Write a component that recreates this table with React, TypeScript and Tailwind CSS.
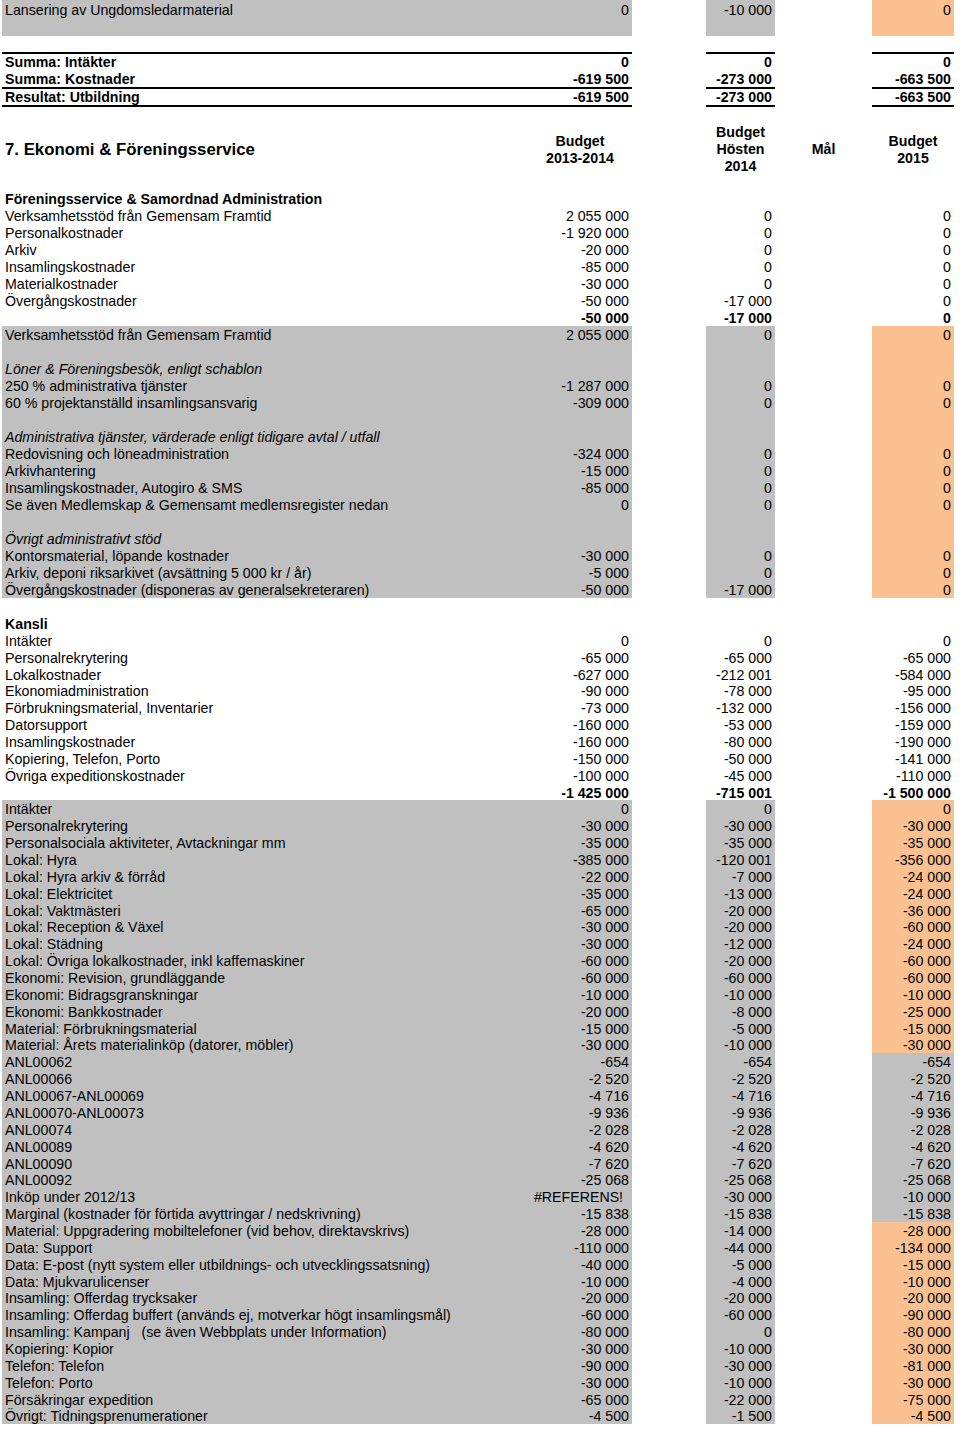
import React from "react";

type Fill = "none" | "gray" | "orange";
type Line = { l?: string; v?: [string, string, string]; bold?: boolean; italic?: boolean };

const fills: Record<Fill, string> = {
  none: "",
  gray: "bg-[#c0c0c0]",
  orange: "bg-[#fac090]",
};

const TALL = "h-[17px] leading-[19px]";
const NARROW = "h-[16.87px] leading-[19px]";

function Row({
  line,
  ab = "none",
  c = "none",
  e = "none",
  h = TALL,
}: {
  line: Line;
  ab?: Fill;
  c?: Fill;
  e?: Fill;
  h?: string;
}) {
  const [vb, vc, ve] = line.v ?? ["", "", ""];
  const wt = line.bold ? "font-bold" : "";
  // text sits in a relative span so descenders paint above the next row's fill
  return (
    <div className={`flex ${h} whitespace-pre`}>
      <div className={`w-[526px] pl-[3px] ${fills[ab]} ${wt} ${line.italic ? "italic" : ""}`}>
        <span className="relative">{line.l}</span>
      </div>
      <div className={`w-[104px] pr-[3px] ${vb === "#REFERENS!" ? "text-center" : "text-right"} ${fills[ab]} ${wt}`}>
        <span className="relative">{vb}</span>
      </div>
      <div className="w-[74px]" />
      <div className={`w-[69px] pr-[3px] text-right ${fills[c]} ${wt}`}>
        <span className="relative">{vc}</span>
      </div>
      <div className="w-[97px]" />
      <div className={`w-[82px] pr-[3px] text-right ${fills[e]} ${wt}`}>
        <span className="relative">{ve}</span>
      </div>
    </div>
  );
}

function Rule() {
  return (
    <div className="flex h-[2px]">
      <div className="w-[630px] bg-black" />
      <div className="w-[74px]" />
      <div className="w-[69px] bg-black" />
      <div className="w-[97px]" />
      <div className="w-[82px] bg-black" />
    </div>
  );
}

const z: [string, string, string] = ["0", "0", "0"];

const foreningsservice: Line[] = [
  { l: "Föreningsservice & Samordnad Administration", bold: true },
  { l: "Verksamhetsstöd från Gemensam Framtid", v: ["2 055 000", "0", "0"] },
  { l: "Personalkostnader", v: ["-1 920 000", "0", "0"] },
  { l: "Arkiv", v: ["-20 000", "0", "0"] },
  { l: "Insamlingskostnader", v: ["-85 000", "0", "0"] },
  { l: "Materialkostnader", v: ["-30 000", "0", "0"] },
  { l: "Övergångskostnader", v: ["-50 000", "-17 000", "0"] },
  { v: ["-50 000", "-17 000", "0"], bold: true },
];

const foreningsGray: Line[] = [
  { l: "Verksamhetsstöd från Gemensam Framtid", v: ["2 055 000", "0", "0"] },
  {},
  { l: "Löner & Föreningsbesök, enligt schablon", italic: true },
  { l: "250 % administrativa tjänster", v: ["-1 287 000", "0", "0"] },
  { l: "60 % projektanställd insamlingsansvarig", v: ["-309 000", "0", "0"] },
  {},
  { l: "Administrativa tjänster, värderade enligt tidigare avtal / utfall", italic: true },
  { l: "Redovisning och löneadministration", v: ["-324 000", "0", "0"] },
  { l: "Arkivhantering", v: ["-15 000", "0", "0"] },
  { l: "Insamlingskostnader, Autogiro & SMS", v: ["-85 000", "0", "0"] },
  { l: "Se även Medlemskap & Gemensamt medlemsregister nedan", v: z },
  {},
  { l: "Övrigt administrativt stöd", italic: true },
  { l: "Kontorsmaterial, löpande kostnader", v: ["-30 000", "0", "0"] },
  { l: "Arkiv, deponi riksarkivet (avsättning 5 000 kr / år)", v: ["-5 000", "0", "0"] },
  { l: "Övergångskostnader (disponeras av generalsekreteraren)", v: ["-50 000", "-17 000", "0"] },
];

const kansli: Line[] = [
  { l: "Kansli", bold: true },
  { l: "Intäkter", v: z },
  { l: "Personalrekrytering", v: ["-65 000", "-65 000", "-65 000"] },
  { l: "Lokalkostnader", v: ["-627 000", "-212 001", "-584 000"] },
  { l: "Ekonomiadministration", v: ["-90 000", "-78 000", "-95 000"] },
  { l: "Förbrukningsmaterial, Inventarier", v: ["-73 000", "-132 000", "-156 000"] },
  { l: "Datorsupport", v: ["-160 000", "-53 000", "-159 000"] },
  { l: "Insamlingskostnader", v: ["-160 000", "-80 000", "-190 000"] },
  { l: "Kopiering, Telefon, Porto", v: ["-150 000", "-50 000", "-141 000"] },
  { l: "Övriga expeditionskostnader", v: ["-100 000", "-45 000", "-110 000"] },
  { v: ["-1 425 000", "-715 001", "-1 500 000"], bold: true },
];

const kansliOrange1: Line[] = [
  { l: "Intäkter", v: z },
  { l: "Personalrekrytering", v: ["-30 000", "-30 000", "-30 000"] },
  { l: "Personalsociala aktiviteter, Avtackningar mm", v: ["-35 000", "-35 000", "-35 000"] },
  { l: "Lokal: Hyra", v: ["-385 000", "-120 001", "-356 000"] },
  { l: "Lokal: Hyra arkiv & förråd", v: ["-22 000", "-7 000", "-24 000"] },
  { l: "Lokal: Elektricitet", v: ["-35 000", "-13 000", "-24 000"] },
  { l: "Lokal: Vaktmästeri", v: ["-65 000", "-20 000", "-36 000"] },
  { l: "Lokal: Reception & Växel", v: ["-30 000", "-20 000", "-60 000"] },
  { l: "Lokal: Städning", v: ["-30 000", "-12 000", "-24 000"] },
  { l: "Lokal: Övriga lokalkostnader, inkl kaffemaskiner", v: ["-60 000", "-20 000", "-60 000"] },
  { l: "Ekonomi: Revision, grundläggande", v: ["-60 000", "-60 000", "-60 000"] },
  { l: "Ekonomi: Bidragsgranskningar", v: ["-10 000", "-10 000", "-10 000"] },
  { l: "Ekonomi: Bankkostnader", v: ["-20 000", "-8 000", "-25 000"] },
  { l: "Material: Förbrukningsmaterial", v: ["-15 000", "-5 000", "-15 000"] },
  { l: "Material: Årets materialinköp (datorer, möbler)", v: ["-30 000", "-10 000", "-30 000"] },
];

const anl: Line[] = [
  { l: "ANL00062", v: ["-654", "-654", "-654"] },
  { l: "ANL00066", v: ["-2 520", "-2 520", "-2 520"] },
  { l: "ANL00067-ANL00069", v: ["-4 716", "-4 716", "-4 716"] },
  { l: "ANL00070-ANL00073", v: ["-9 936", "-9 936", "-9 936"] },
  { l: "ANL00074", v: ["-2 028", "-2 028", "-2 028"] },
  { l: "ANL00089", v: ["-4 620", "-4 620", "-4 620"] },
  { l: "ANL00090", v: ["-7 620", "-7 620", "-7 620"] },
  { l: "ANL00092", v: ["-25 068", "-25 068", "-25 068"] },
  { l: "Inköp under 2012/13", v: ["#REFERENS!", "-30 000", "-10 000"] },
  { l: "Marginal (kostnader för förtida avyttringar / nedskrivning)", v: ["-15 838", "-15 838", "-15 838"] },
];

const kansliOrange2: Line[] = [
  { l: "Material: Uppgradering mobiltelefoner (vid behov, direktavskrivs)", v: ["-28 000", "-14 000", "-28 000"] },
  { l: "Data: Support", v: ["-110 000", "-44 000", "-134 000"] },
  { l: "Data: E-post (nytt system eller utbildnings- och utvecklingssatsning)", v: ["-40 000", "-5 000", "-15 000"] },
  { l: "Data: Mjukvarulicenser", v: ["-10 000", "-4 000", "-10 000"] },
  { l: "Insamling: Offerdag trycksaker", v: ["-20 000", "-20 000", "-20 000"] },
  { l: "Insamling: Offerdag buffert (används ej, motverkar högt insamlingsmål)", v: ["-60 000", "-60 000", "-90 000"] },
  { l: "Insamling: Kampanj   (se även Webbplats under Information)", v: ["-80 000", "0", "-80 000"] },
  { l: "Kopiering: Kopior", v: ["-30 000", "-10 000", "-30 000"] },
  { l: "Telefon: Telefon", v: ["-90 000", "-30 000", "-81 000"] },
  { l: "Telefon: Porto", v: ["-30 000", "-10 000", "-30 000"] },
  { l: "Försäkringar expedition", v: ["-65 000", "-22 000", "-75 000"] },
  { l: "Övrigt: Tidningsprenumerationer", v: ["-4 500", "-1 500", "-4 500"] },
];

export default function App() {
  return (
    <div className="min-h-[1433px] w-[960px] bg-white pl-[2px] font-['Liberation_Sans',Arial,sans-serif] text-[14.2px] text-black">
      {/* Utbildning – tail */}
      <Row line={{ l: "Lansering av Ungdomsledarmaterial", v: ["0", "-10 000", "0"] }} ab="gray" c="gray" e="orange" h="h-[18px] leading-[20px]" />
      <Row line={{}} ab="gray" c="gray" e="orange" h="h-[18px] leading-[18px]" />
      <div className="h-[16px]" />
      <Rule />
      <Row line={{ l: "Summa: Intäkter", v: ["0", "0", "0"], bold: true }} h="h-[17px] leading-[17px]" />
      <Row line={{ l: "Summa: Kostnader", v: ["-619 500", "-273 000", "-663 500"], bold: true }} h="h-[16px] leading-[17px]" />
      <Rule />
      <Row line={{ l: "Resultat: Utbildning", v: ["-619 500", "-273 000", "-663 500"], bold: true }} h="h-[16px] leading-[16px]" />
      <Rule />
      <div className="h-[17px]" />

      {/* Section header */}
      <div className="flex h-[51px] items-center font-bold leading-[17px]">
        <div className="w-[526px] pl-[3px] text-[16.8px]">7. Ekonomi &amp; Föreningsservice</div>
        <div className="w-[104px] text-center">
          Budget
          <br />
          2013-2014
        </div>
        <div className="w-[74px]" />
        <div className="w-[69px] text-center">
          Budget
          <br />
          Hösten
          <br />
          2014
        </div>
        <div className="w-[97px] text-center">Mål</div>
        <div className="w-[82px] text-center">
          Budget
          <br />
          2015
        </div>
      </div>
      <div className="h-[15px]" />

      {foreningsservice.map((r, i) => (
        <Row key={`f${i}`} line={r} />
      ))}
      {foreningsGray.map((r, i) => (
        <Row key={`g${i}`} line={r} ab="gray" c="gray" e="orange" />
      ))}
      <div className="h-[17px]" />
      {kansli.map((r, i) => (
        <Row key={`k${i}`} line={r} h={NARROW} />
      ))}
      {kansliOrange1.map((r, i) => (
        <Row key={`o${i}`} line={r} ab="gray" c="gray" e="orange" h={NARROW} />
      ))}
      {anl.map((r, i) => (
        <Row key={`a${i}`} line={r} ab="gray" c="gray" e="gray" h={NARROW} />
      ))}
      {kansliOrange2.map((r, i) => (
        <Row key={`p${i}`} line={r} ab="gray" c="gray" e="orange" h={NARROW} />
      ))}
    </div>
  );
}
